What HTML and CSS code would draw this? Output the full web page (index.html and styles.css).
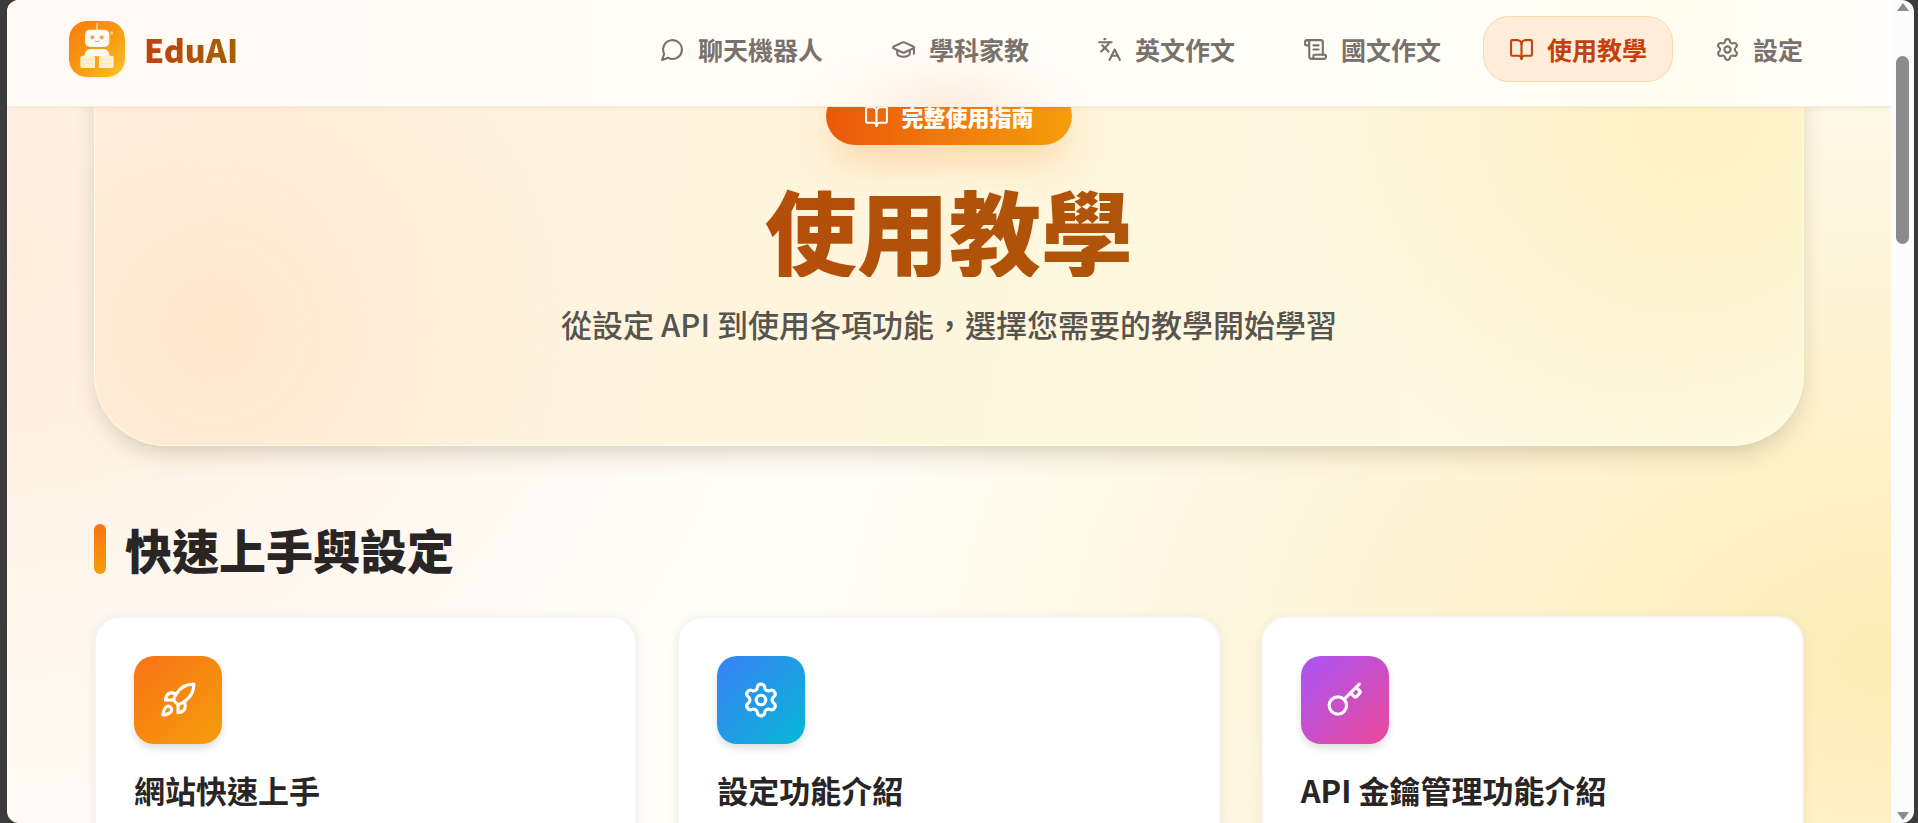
FILE: index.html
```html
<!DOCTYPE html>
<html lang="zh-Hant">
<head>
<meta charset="utf-8">
<title>EduAI 使用教學</title>
<link rel="stylesheet" href="styles.css">
</head>
<body>
<svg class="sprite" aria-hidden="true">
  <symbol id="i-book" viewBox="0 0 24 24"><path d="M12 7v14"/><path d="M3 18a1 1 0 0 1-1-1V4a1 1 0 0 1 1-1h5a4 4 0 0 1 4 4 4 4 0 0 1 4-4h5a1 1 0 0 1 1 1v13a1 1 0 0 1-1 1h-6a3 3 0 0 0-3 3 3 3 0 0 0-3-3z"/></symbol>
  <symbol id="i-gear" viewBox="0 0 24 24"><path d="M9.671 4.136a2.34 2.34 0 0 1 4.659 0 2.34 2.34 0 0 0 3.319 1.915 2.34 2.34 0 0 1 2.33 4.033 2.34 2.34 0 0 0 0 3.831 2.34 2.34 0 0 1-2.33 4.033 2.34 2.34 0 0 0-3.319 1.915 2.34 2.34 0 0 1-4.659 0 2.34 2.34 0 0 0-3.32-1.915 2.34 2.34 0 0 1-2.33-4.033 2.34 2.34 0 0 0 0-3.831A2.34 2.34 0 0 1 6.35 6.051a2.34 2.34 0 0 0 3.319-1.915"/><circle cx="12" cy="12" r="3"/></symbol>
</svg>
<div class="window">
  <div class="page">
    <header class="topbar">
      <a class="brand" href="#">
        <svg class="brand-logo" viewBox="0 0 168 168" aria-hidden="true">
          <defs>
            <linearGradient id="lg" x1="0" y1="0" x2="1" y2="1"><stop offset="0" stop-color="#fb7a12"/><stop offset=".5" stop-color="#f8980f"/><stop offset="1" stop-color="#fbc42a"/></linearGradient>
          </defs>
          <rect width="168" height="168" rx="50" fill="url(#lg)"/>
          <path d="M84 8v20" stroke="#fde9cf" stroke-width="4" stroke-linecap="round"/>
          <rect x="48" y="26" width="73" height="52" rx="15" fill="#fffaf2"/>
          <circle cx="70" cy="49" r="8" fill="#fbdcc4"/><circle cx="98" cy="49" r="8" fill="#fbdcc4"/>
          <circle cx="70" cy="49" r="4" fill="#d98a64"/><circle cx="98" cy="49" r="4" fill="#d98a64"/>
          <path d="M78 60q6 5 12 0" fill="none" stroke="#e79a6c" stroke-width="3" stroke-linecap="round"/>
          <circle cx="128" cy="36" r="5" fill="#fdc978"/>
          <path d="M46 106q2-22 18-22h40q16 0 18 22z" fill="#fffaf2"/>
          <path d="M40 104h30q8 0 8 8v29H40q-6 0-6-6v-25q0-6 6-6zM128 104H98q-8 0-8 8v29h38q6 0 6-6v-25q0-6-6-6z" fill="#fff1cd"/>
          <path d="M42 116h28M42 127h28M98 116h28M98 127h28" stroke="#fae5b4" stroke-width="3"/>
        </svg>
        <span class="brand-name">EduAI</span>
      </a>
      <nav class="nav">
        <a class="nav-item" href="#"><svg class="icon" viewBox="0 0 24 24"><path d="M7.9 20A9 9 0 1 0 4 16.1L2 22Z"/></svg>聊天機器人</a>
        <a class="nav-item" href="#"><svg class="icon" viewBox="0 0 24 24"><path d="M21.42 10.922a1 1 0 0 0-.019-1.838L12.83 5.18a2 2 0 0 0-1.66 0L2.6 9.08a1 1 0 0 0 0 1.832l8.57 3.908a2 2 0 0 0 1.66 0z"/><path d="M22 10v6"/><path d="M6 12.5V16a6 3 0 0 0 12 0v-3.5"/></svg>學科家教</a>
        <a class="nav-item" href="#"><svg class="icon" viewBox="0 0 24 24"><path d="m5 8 6 6"/><path d="m4 14 6-6 2-3"/><path d="M2 5h12"/><path d="M7 2h1"/><path d="m22 22-5-10-5 10"/><path d="M14 18h6"/></svg>英文作文</a>
        <a class="nav-item" href="#"><svg class="icon" viewBox="0 0 24 24"><path d="M15 12h-5"/><path d="M15 8h-5"/><path d="M19 17V5a2 2 0 0 0-2-2H4"/><path d="M8 21h12a2 2 0 0 0 2-2v-1a1 1 0 0 0-1-1H11a1 1 0 0 0-1 1v1a2 2 0 1 1-4 0V5a2 2 0 1 0-4 0v2a1 1 0 0 0 1 1h3"/></svg>國文作文</a>
        <a class="nav-item active" href="#" aria-current="page"><svg class="icon"><use href="#i-book"/></svg>使用教學</a>
        <a class="nav-item" href="#"><svg class="icon"><use href="#i-gear"/></svg>設定</a>
      </nav>
    </header>
    <main class="content">
      <section class="hero">
        <div class="badge"><svg class="icon"><use href="#i-book"/></svg>完整使用指南</div>
        <h1 class="hero-title">使用教學</h1>
        <p class="hero-text">從設定 API 到使用各項功能，選擇您需要的教學開始學習</p>
      </section>
      <section class="section">
        <h2 class="section-title">快速上手與設定</h2>
        <div class="cards">
          <a class="card" href="#">
            <span class="tile tile-orange"><svg class="icon tile-icon" viewBox="0 0 24 24"><path d="M4.5 16.5c-1.5 1.26-2 5-2 5s3.74-.5 5-2c.71-.84.7-2.13-.09-2.91a2.18 2.18 0 0 0-2.91-.09z"/><path d="m12 15-3-3a22 22 0 0 1 2-3.95A12.88 12.88 0 0 1 22 2c0 2.72-.78 7.5-6 11a22.35 22.35 0 0 1-4 2z"/><path d="M9 12H4s.55-3.03 2-4c1.62-1.08 5 0 5 0"/><path d="M12 15v5s3.03-.55 4-2c1.08-1.62 0-5 0-5"/></svg></span>
            <h3 class="card-title">網站快速上手</h3>
          </a>
          <a class="card" href="#">
            <span class="tile tile-blue"><svg class="icon tile-icon"><use href="#i-gear"/></svg></span>
            <h3 class="card-title">設定功能介紹</h3>
          </a>
          <a class="card" href="#">
            <span class="tile tile-pink"><svg class="icon tile-icon" viewBox="0 0 24 24"><path d="m15.5 7.5 2.3 2.3a1 1 0 0 0 1.4 0l2.1-2.1a1 1 0 0 0 0-1.4L19 4"/><path d="m21 2-9.6 9.6"/><circle cx="7.5" cy="15.5" r="5.5"/></svg></span>
            <h3 class="card-title">API 金鑰管理功能介紹</h3>
          </a>
        </div>
      </section>
    </main>
  </div>
  <div class="scrollbar" aria-hidden="true">
    <svg class="arrow" viewBox="0 0 14 10"><path d="M7 1 13 9H1z"/></svg>
    <div class="track"><div class="thumb"></div></div>
    <svg class="arrow" viewBox="0 0 14 10"><path d="M7 9 13 1H1z"/></svg>
  </div>
</div>
</body>
</html>
```
FILE: styles.css
```css
* { box-sizing: border-box; }
body {
  margin: 0;
  height: 100vh;
  overflow: hidden;
  background: #3b3b3b;
  font-family: "Noto Sans CJK TC", "Noto Sans", sans-serif;
  color: #292524;
}
a { color: inherit; text-decoration: none; }
h1, h2, h3, p { margin: 0; }
.sprite { position: absolute; width: 0; height: 0; }
.icon {
  width: 25px;
  height: 25px;
  flex: none;
  fill: none;
  stroke: currentColor;
  stroke-width: 2;
  stroke-linecap: round;
  stroke-linejoin: round;
}

.window {
  display: flex;
  height: 100vh;
  margin: 0 4px 0 7px;
  border-radius: 12px;
  overflow: hidden;
}
.page {
  position: relative;
  flex: 1;
  overflow: hidden;
  background:
    radial-gradient(ellipse 42% 85% at 0% 32%, rgba(255, 234, 212, .8), rgba(255, 241, 228, .5) 50%, rgba(255, 250, 245, 0)),
    radial-gradient(ellipse 58% 90% at 100% 80%, rgba(252, 236, 178, .95), rgba(253, 240, 195, .6) 50%, rgba(255, 252, 240, 0)),
    #fffdf8;
}

.topbar {
  position: absolute;
  inset: 0 0 auto;
  z-index: 2;
  display: flex;
  align-items: center;
  justify-content: space-between;
  padding: 16px 62px 24px;
  background:
    radial-gradient(ellipse 170px 70px at 50% 100%, rgba(253, 234, 220, .8), rgba(255, 244, 235, .4) 55%, rgba(255, 252, 246, 0)),
    linear-gradient(90deg, #fffaf3, #fffdf6 40%, #fffef8 75%, #fffcf0 88%, #fffefb);
  border-bottom: 1px solid #f6ecdf;
  box-shadow: 0 1px 4px rgba(120, 80, 30, .1);
}
.brand { display: flex; align-items: center; gap: 19px; }
.brand-logo { width: 56px; height: 56px; border-radius: 18px; box-shadow: 0 1px 3px rgba(180, 100, 20, .15); }
.brand-name {
  font-size: 32px;
  line-height: 44px;
  font-weight: 900;
  background: linear-gradient(90deg, #c2410c, #a16207);
  -webkit-background-clip: text;
  background-clip: text;
  color: transparent;
}
.nav { display: flex; gap: 16px; }
.nav-item {
  display: flex;
  align-items: center;
  gap: 13px;
  height: 66px;
  padding: 0 25px;
  border: 1px solid transparent;
  border-radius: 26px;
  font-size: 25px;
  font-weight: 700;
  color: #78716c;
}
.nav-item.active {
  color: #c2410c;
  background: #ffedd9;
  border-color: #f9d8ae;
}

.content { padding: 0 87px; }
.hero {
  display: flex;
  flex-direction: column;
  align-items: center;
  margin-top: -40px;
  padding: 126px 40px 98px;
  border: 1px solid rgba(255, 255, 255, .5);
  border-radius: 72px;
  text-align: center;
  background:
    radial-gradient(circle 350px at 7% 76%, rgba(255, 222, 192, .6), rgba(255, 228, 202, .45) 40%, rgba(255, 235, 210, 0)),
    radial-gradient(circle 400px at 94% 32%, rgba(252, 236, 172, .6), rgba(252, 238, 180, 0)),
    linear-gradient(100deg, #fff1e0, #fef6dc 50%, #fffae6);
  box-shadow: 0 10px 28px -8px rgba(90, 70, 30, .32);
}
.badge {
  display: flex;
  align-items: center;
  gap: 12px;
  height: 58px;
  padding: 0 38px;
  border-radius: 29px;
  color: #fff;
  font-size: 22px;
  font-weight: 900;
  background: linear-gradient(90deg, #ea580c, #f59e0b);
  box-shadow: 0 20px 40px -6px rgba(249, 130, 22, .3);
}
.hero-title {
  align-self: stretch;
  margin-top: 38px;
  padding-bottom: 2px;
  font-size: 92px;
  line-height: 92px;
  font-weight: 900;
  background: linear-gradient(90deg, #c2410c, #a16207);
  -webkit-background-clip: text;
  background-clip: text;
  color: transparent;
}
.hero-text {
  margin-top: 24px;
  font-size: 31px;
  line-height: 46px;
  font-weight: 500;
  color: #57534e;
}

.section { padding-top: 78px; }
.section-title {
  display: flex;
  align-items: center;
  gap: 19px;
  font-size: 47px;
  line-height: 50px;
  font-weight: 900;
}
.section-title::before {
  content: "";
  width: 12px;
  height: 50px;
  border-radius: 6px;
  background: linear-gradient(#f97316, #f59e0b);
}
.cards {
  display: grid;
  grid-template-columns: repeat(3, 1fr);
  gap: 40px;
  margin-top: 42px;
}
.card {
  padding: 38px 38px 120px;
  border: 2px solid #f5f5f4;
  border-radius: 26px;
  background: #fff;
  box-shadow: 0 2px 8px rgba(90, 70, 30, .1);
}
.tile {
  display: flex;
  align-items: center;
  justify-content: center;
  width: 88px;
  height: 88px;
  border-radius: 20px;
  color: #fff;
  box-shadow: 0 5px 8px -1px rgba(0, 0, 0, .14);
}
.tile-icon { width: 38px; height: 38px; }
.tile-orange { background: linear-gradient(135deg, #f97316, #f59e0b); }
.tile-blue { background: linear-gradient(135deg, #3b82f6, #06b6d4); }
.tile-pink { background: linear-gradient(135deg, #a855f7, #ec4899); }
.card-title {
  margin-top: 24px;
  font-size: 31px;
  line-height: 44px;
  font-weight: 700;
  color: #292524;
}

.scrollbar {
  display: flex;
  flex-direction: column;
  align-items: center;
  gap: 4px;
  width: 23px;
  padding: 2px 0;
  background: #fcfcfc;
}
.arrow { width: 14px; height: 10px; fill: #8b8b8b; }
.track { flex: 1; padding-top: 40px; }
.thumb { width: 13px; height: 188px; border-radius: 7px; background: #8b8b8b; }
```
